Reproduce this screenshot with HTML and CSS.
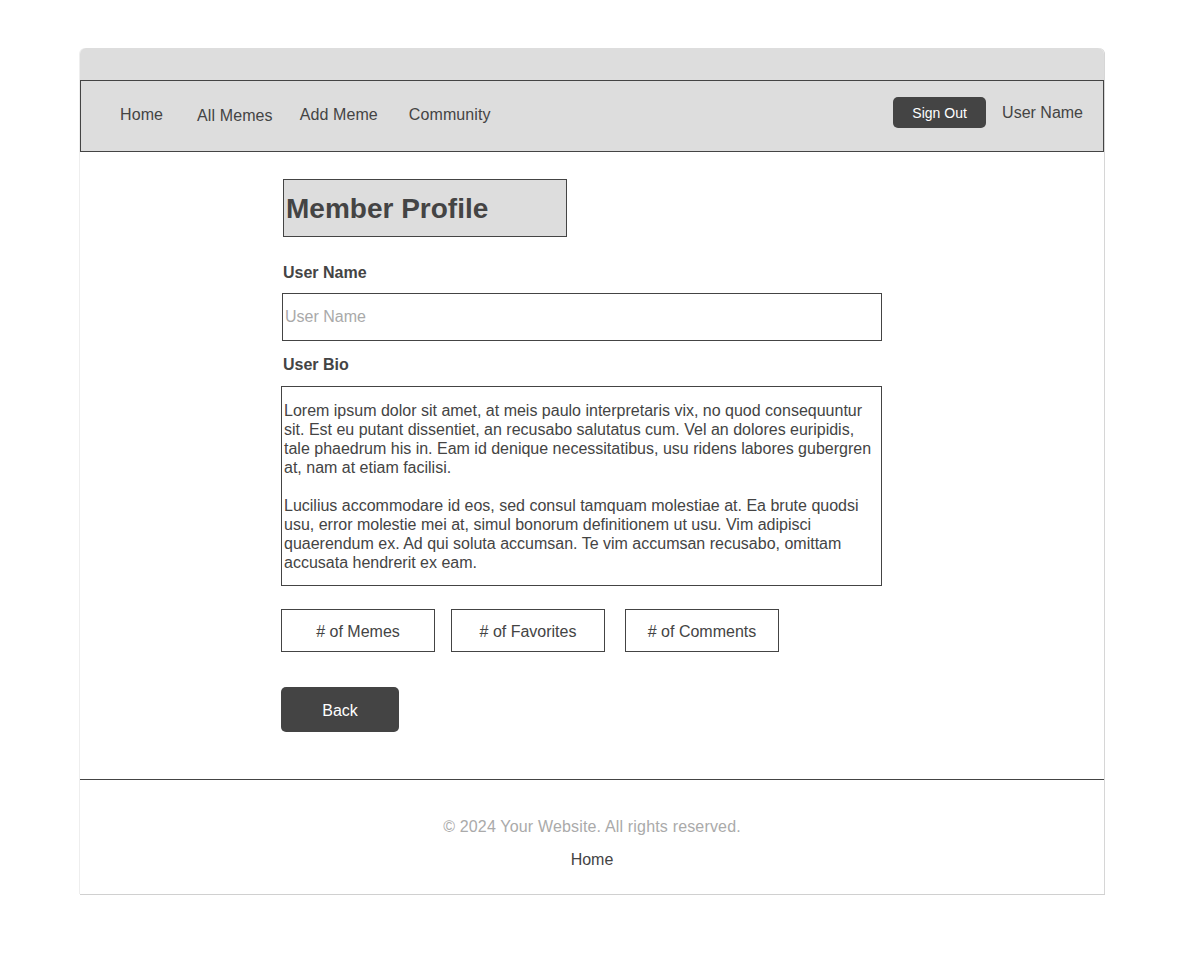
FILE: index.html
```html
<!DOCTYPE html>
<html lang="en">
<head>
<meta charset="utf-8">
<title>Member Profile</title>
<link rel="stylesheet" href="styles.css">
</head>
<body>
<div class="page">
  <div class="top-band"></div>
  <nav class="nav">
    <div class="nav-left">
      <a class="nav-link link-home" href="#">Home</a>
      <a class="nav-link link-all" href="#">All Memes</a>
      <a class="nav-link link-add" href="#">Add Meme</a>
      <a class="nav-link link-comm" href="#">Community</a>
    </div>
    <div class="nav-right">
      <button class="signout" type="button">Sign Out</button>
      <span class="nav-user">User Name</span>
    </div>
  </nav>
  <main class="main">
    <h1 class="title">Member Profile</h1>
    <label class="label label-name" for="uname">User Name</label>
    <input class="input" id="uname" type="text" placeholder="User Name">
    <label class="label label-bio" for="ubio">User Bio</label>
    <textarea class="bio" id="ubio">Lorem ipsum dolor sit amet, at meis paulo interpretaris vix, no quod consequuntur sit. Est eu putant dissentiet, an recusabo salutatus cum. Vel an dolores euripidis, tale phaedrum his in. Eam id denique necessitatibus, usu ridens labores gubergren at, nam at etiam facilisi.

Lucilius accommodare id eos, sed consul tamquam molestiae at. Ea brute quodsi usu, error molestie mei at, simul bonorum definitionem ut usu. Vim adipisci quaerendum ex. Ad qui soluta accumsan. Te vim accumsan recusabo, omittam accusata hendrerit ex eam.</textarea>
    <div class="stats">
      <div class="stat stat-memes"># of Memes</div>
      <div class="stat stat-favs"># of Favorites</div>
      <div class="stat stat-comments"># of Comments</div>
    </div>
    <button class="back" type="button">Back</button>
  </main>
  <footer class="footer">
    <p class="copy">© 2024 Your Website. All rights reserved.</p>
    <a class="footer-link" href="#">Home</a>
  </footer>
</div>
</body>
</html>
```

FILE: styles.css
```css
* { box-sizing: border-box; }

body {
  margin: 0;
  padding: 48px 0 60px;
  background: #fff;
  font-family: "Liberation Sans", Arial, sans-serif;
  font-size: 16px;
  color: #444;
}

.page {
  width: 1024px;
  margin: 0 auto;
  background: #fff;
  border-radius: 6px 6px 0 0;
  box-shadow: 1px 0 0 #d6d6d6, -1px 0 0 #eee, 0 1px 0 #d0d0d0, 1px 1px 0 #d0d0d0;
}

.top-band {
  height: 32px;
  background: #ddd;
  border-radius: 6px 6px 0 0;
}

.nav {
  height: 72px;
  background: #ddd;
  border: 1px solid #444;
  display: flex;
  align-items: center;
  justify-content: space-between;
  padding: 0 20px 0 39px;
}

.nav-left {
  display: flex;
  align-items: center;
  margin-bottom: 3px;
}

.nav-link {
  color: #444;
  text-decoration: none;
  font-size: 16px;
  line-height: 18px;
  letter-spacing: 0.1px;
}

.link-all { margin-left: 34px; margin-top: 2px; }
.link-add { margin-left: 27px; }
.link-comm { margin-left: 31px; }

.nav-right {
  display: flex;
  align-items: center;
  margin-bottom: 7px;
}

.signout {
  width: 93px;
  height: 31px;
  background: #444;
  color: #fff;
  border: none;
  border-radius: 5px;
  font-family: "Liberation Sans", Arial, sans-serif;
  font-size: 14px;
  padding: 0;
}

.nav-user {
  margin-left: 16px;
  font-size: 16px;
  line-height: 18px;
}

.main {
  padding: 27px 0 47px 203px;
  display: flex;
  flex-direction: column;
  align-items: flex-start;
}

.title {
  margin: 0;
  width: 284px;
  height: 58px;
  padding: 13px 2px 11px;
  background: #ddd;
  border: 1px solid #444;
  font-size: 28px;
  line-height: 32px;
  font-weight: bold;
  color: #444;
}

.label {
  display: block;
  font-weight: bold;
  font-size: 16px;
  line-height: 18px;
}

.label-name { margin-top: 27px; }
.label-bio { margin-top: 15px; }

.input {
  margin: 11px 0 0 -1px;
  width: 600px;
  height: 48px;
  border: 1px solid #444;
  padding: 0 2px;
  font-family: "Liberation Sans", Arial, sans-serif;
  font-size: 16px;
  color: #444;
  background: #fff;
}

.input::placeholder { color: #a9a9a9; }

.bio {
  display: block;
  margin: 12px 0 0 -2px;
  width: 601px;
  height: 200px;
  border: 1px solid #444;
  padding: 14px 2px 10px;
  font-family: "Liberation Sans", Arial, sans-serif;
  font-size: 16px;
  line-height: 19px;
  color: #444;
  resize: none;
  overflow: hidden;
  background: #fff;
}

.stats {
  display: flex;
  margin: 23px 0 0 -2px;
}

.stat {
  width: 154px;
  height: 43px;
  border: 1px solid #444;
  display: flex;
  align-items: center;
  justify-content: center;
  padding-top: 2px;
  font-size: 16px;
  color: #444;
}

.stat-favs { margin-left: 16px; }
.stat-comments { margin-left: 20px; }

.back {
  margin: 35px 0 0 -2px;
  width: 118px;
  height: 45px;
  background: #444;
  color: #fff;
  border: none;
  border-radius: 5px;
  font-family: "Liberation Sans", Arial, sans-serif;
  font-size: 16px;
  padding: 2px 0 0;
}

.footer {
  border-top: 1px solid #444;
  padding: 38px 0 25px;
  text-align: center;
}

.copy {
  margin: 0;
  color: #aaa;
  font-size: 16px;
  line-height: 18px;
  letter-spacing: 0.17px;
}

.footer-link {
  display: inline-block;
  margin-top: 15px;
  color: #444;
  text-decoration: none;
  font-size: 16px;
  line-height: 18px;
}
```
